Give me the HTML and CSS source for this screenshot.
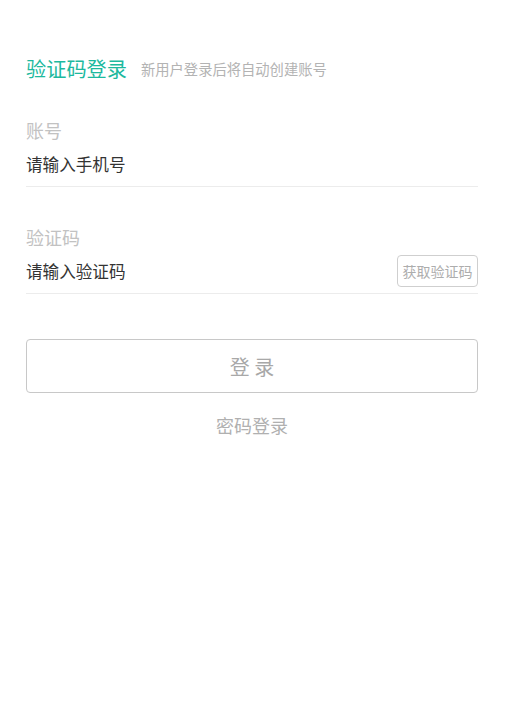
FILE: index.html
```html
<!DOCTYPE html>
<html lang="zh-CN">
<head>
<meta charset="utf-8">
<link rel="stylesheet" href="styles.css">
</head>
<body>
<div class="page">
  <div class="header">
    <span class="title">验证码登录</span>
    <span class="subtitle">新用户登录后将自动创建账号</span>
  </div>
  <div class="field first">
    <div class="label">账号</div>
    <div class="row">
      <span class="input">请输入手机号</span>
    </div>
  </div>
  <div class="field second">
    <div class="label">验证码</div>
    <div class="row code-row">
      <span class="input">请输入验证码</span>
      <span class="code-btn">获取验证码</span>
    </div>
  </div>
  <div class="login-btn">登 录</div>
  <div class="switch">密码登录</div>
</div>
</body>
</html>
```
FILE: styles.css
```css
html, body {
  margin: 0;
  padding: 0;
  background: #fff;
}
body {
  font-family: "Noto Sans CJK SC", "Noto Sans", sans-serif;
}
.page {
  padding: 55px 32px 0 26px;
}
.header {
  display: flex;
  align-items: center;
  height: 28px;
}
.title {
  font-size: 20.2px;
  line-height: 28px;
  color: #1db99e;
}
.subtitle {
  font-size: 14.3px;
  line-height: 20px;
  color: #b3b3b3;
  margin-left: 14px;
}
.field.first {
  margin-top: 35px;
}
.field.second {
  margin-top: 38px;
}
.label {
  font-size: 18px;
  line-height: 24px;
  color: #c2c2c2;
}
.row {
  display: flex;
  align-items: center;
  border-bottom: 1px solid #ececec;
  margin-top: 10px;
  padding-bottom: 10px;
}
.input {
  font-size: 16.6px;
  line-height: 24px;
  color: #333;
}
.code-row {
  justify-content: space-between;
  margin-top: 6px;
  padding-bottom: 6px;
}
.code-btn {
  box-sizing: border-box;
  height: 32px;
  width: 81px;
  border: 1px solid #cfcfcf;
  border-radius: 4px;
  font-size: 14px;
  line-height: 30px;
  text-align: center;
  color: #adadad;
}
.login-btn {
  box-sizing: border-box;
  margin-top: 45px;
  height: 54px;
  border: 1px solid #c8c8c8;
  border-radius: 4px;
  display: flex;
  align-items: center;
  justify-content: center;
  font-size: 20px;
  color: #a8a8a8;
}
.switch {
  margin-top: 20px;
  text-align: center;
  font-size: 18px;
  line-height: 24px;
  color: #b0b0b0;
}
```
